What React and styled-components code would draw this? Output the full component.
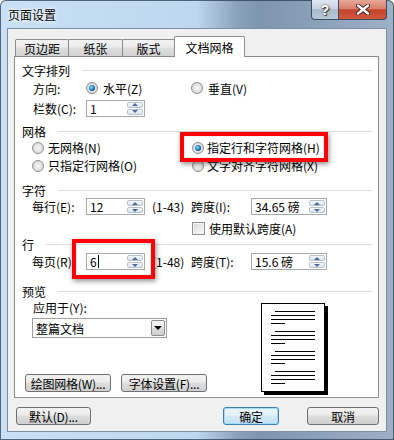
import React from 'react';
import styled, { createGlobalStyle, css } from 'styled-components';

const Global = createGlobalStyle`
  html, body { margin: 0; padding: 0; background: #fff; }
  body { font-family: "Noto Sans CJK SC", "Liberation Sans", sans-serif; font-size: 12px; color: #000; }
  * { box-sizing: border-box; }
`;

const Window = styled.div`
  position: relative;
  width: 394px;
  height: 440px;
  display: flex;
  flex-direction: column;
  padding: 0 7px 8px 7px;
  border-radius: 6px 6px 0 0;
  background: linear-gradient(90deg, #c9e0f5 0%, #bdd7ee 50%, #8ba2bc 60%, #7e95b0 66%, #9db1c6 100%);
  box-shadow: inset 0 0 0 1px rgba(45, 60, 80, 0.75);
`;

const TitleBar = styled.div`
  height: 28px;
  display: flex;
  align-items: flex-start;
  justify-content: space-between;
  flex: none;
`;

const Title = styled.div`
  margin: 7px 0 0 1px;
  line-height: 16px;
  font-size: 12px;
  text-shadow: 0 0 5px #fff, 0 0 3px #fff;
`;

const Caption = styled.div`
  display: flex;
`;

const CapBtn = styled.div`
  height: 20px;
  width: ${p => p.$w}px;
  border: 1px solid #3c4c60;
  border-top: none;
  display: flex;
  align-items: center;
  justify-content: center;
  color: #fff;
  font-family: "Liberation Sans", sans-serif;
  font-weight: bold;
  font-size: 14px;
  text-shadow: 0 0 2px #333, 1px 1px 1px #333;
  ${p => p.$close ? css`
    border-radius: 0 0 4px 0;
    border-left: none;
    background: linear-gradient(#e7a797 0%, #d9806c 45%, #c4432b 52%, #d0593c 100%);
  ` : css`
    border-radius: 0 0 0 4px;
    background: linear-gradient(#dfe8f0 0%, #c7d4e1 45%, #a9bacb 52%, #b9c8d7 100%);
  `}
`;

const Client = styled.div`
  flex: 1;
  display: flex;
  flex-direction: column;
  background: #f0f0f0;
  border: 1px solid #7f8ea1;
  padding: 7px 7px 0 6px;
`;

const TabRow = styled.div`
  display: flex;
  align-items: flex-end;
  height: 20px;
  padding-left: 1px;
  position: relative;
  z-index: 2;
  flex: none;
`;

const Tab = styled.div`
  width: ${p => p.$w}px;
  height: ${p => (p.$active ? 21 : 17)}px;
  margin-left: ${p => (p.$first ? 0 : -1)}px;
  margin-bottom: ${p => (p.$active ? -1 : 0)}px;
  border: 1px solid #898c95;
  border-bottom: none;
  border-radius: 2px 2px 0 0;
  display: flex;
  align-items: center;
  justify-content: center;
  padding-top: ${p => (p.$active ? 1 : 1)}px;
  position: relative;
  z-index: ${p => (p.$active ? 2 : 1)};
  background: ${p => (p.$active ? '#fff' : 'linear-gradient(#f3f3f3 0%, #ebebeb 45%, #dedede 50%, #d2d2d2 100%)')};
`;

const Panel = styled.div`
  height: 342px;
  flex: none;
  background: #fff;
  border: 1px solid #898c95;
  padding: 5px 6px 0 7px;
  display: flex;
  flex-direction: column;
`;

const Header = styled.div`
  display: flex;
  align-items: center;
  height: 16px;
  margin-top: ${p => p.$mt || 0}px;
  flex: none;
  &::after {
    content: '';
    flex: 1;
    height: 1px;
    background: #d5dfe5;
    margin-left: 12px;
  }
`;

const Row = styled.div`
  display: flex;
  align-items: center;
  height: ${p => p.$h || 17}px;
  margin-top: ${p => p.$mt || 0}px;
  padding-left: ${p => p.$pl ?? 10}px;
  flex: none;
`;

const Cell = styled.div`
  width: ${p => (p.$w ? `${p.$w}px` : 'auto')};
  padding-left: ${p => p.$pl || 0}px;
  flex: none;
  display: flex;
  align-items: center;
  gap: ${p => p.$gap || 0}px;
  white-space: nowrap;
`;

const Radio = styled.span`
  width: 12px;
  height: 12px;
  flex: none;
  border-radius: 50%;
  border: 1px solid #8f8f8f;
  position: relative;
  background: radial-gradient(circle at 50% 50%, #f6f6f6 0%, #e2e2e2 55%, #cfcfcf 100%);
  ${p => p.$on && css`
    &::after {
      content: '';
      position: absolute;
      left: 2px;
      top: 2px;
      width: 6px;
      height: 6px;
      border-radius: 50%;
      background: radial-gradient(circle at 40% 40%, #9fe3ff 0%, #2790d4 40%, #0d4670 75%, #1a2a3a 100%);
    }
  `}
`;

const Check = styled.span`
  width: 13px;
  height: 13px;
  flex: none;
  border: 1px solid #8f8f8f;
  background: linear-gradient(135deg, #d6d6d6 0%, #f4f4f4 80%, #fff 100%);
  box-shadow: inset 0 0 0 1px #f4f4f4;
`;

const SpinBox = styled.div`
  width: ${p => p.$w}px;
  height: 17px;
  flex: none;
  border: 1px solid #a5a9ae;
  background: #fff;
  display: flex;
  align-items: center;
  padding-left: 3px;
`;

const Caret = styled.span`
  display: inline-block;
  width: 1px;
  height: 13px;
  background: #000;
  margin-left: 1px;
`;

const SpinBtns = styled.div`
  margin-left: auto;
  margin-right: 1px;
  width: 16px;
  height: 13px;
  display: flex;
  flex-direction: column;
  gap: 1px;
`;

const SpinBtn = styled.div`
  flex: 1;
  border: 1px solid #b7c2ce;
  border-radius: 2px;
  background: linear-gradient(#f6f9fc, #dce4ed);
  display: flex;
  align-items: center;
  justify-content: center;
  &::before {
    content: '';
    border-left: 3px solid transparent;
    border-right: 3px solid transparent;
    ${p => (p.$down ? 'border-top: 3px solid #4d6b9c;' : 'border-bottom: 3px solid #4d6b9c;')}
  }
`;

const Lower = styled.div`
  display: flex;
  flex: none;
  padding-left: 3px;
`;

const LeftCol = styled.div`
  width: 236px;
  display: flex;
  flex-direction: column;
`;

const ApplyLabel = styled.div`
  height: 16px;
  line-height: 16px;
  margin: 1px 0 0 8px;
`;

const Select = styled.div`
  width: 135px;
  height: 20px;
  margin: 2px 0 0 7px;
  border: 1px solid #a0a0a0;
  background: #fff;
  display: flex;
  align-items: center;
  padding-left: 3px;
`;

const DropBtn = styled.div`
  margin-left: auto;
  margin-right: 1px;
  width: 14px;
  height: 16px;
  border: 1px solid #8b8b8b;
  border-radius: 2px;
  background: linear-gradient(#f3f3f3 0%, #ebebeb 45%, #dddddd 50%, #d0d0d0 100%);
  display: flex;
  align-items: center;
  justify-content: center;
  &::before {
    content: '';
    border-left: 4px solid transparent;
    border-right: 4px solid transparent;
    border-top: 4px solid #000;
  }
`;

const BtnRow = styled.div`
  display: flex;
  gap: 10px;
  margin-top: 36px;
`;

const Button = styled.div`
  width: ${p => p.$w}px;
  height: 18px;
  flex: none;
  border: 1px solid ${p => (p.$default ? '#3c7fb1' : '#707070')};
  border-radius: 3px;
  background: linear-gradient(#f2f2f2 0%, #ebebeb 45%, #dddddd 50%, #cfcfcf 100%);
  display: flex;
  align-items: center;
  justify-content: center;
  white-space: nowrap;
  letter-spacing: -0.2px;
  ${p => p.$default && css`
    box-shadow: inset 0 0 0 1px #9fdcfa;
    background: linear-gradient(#eaf6fd 0%, #e3f1fa 45%, #d3e9f7 50%, #c6e1f3 100%);
  `}
`;

const Preview = styled.svg`
  margin-top: 4px;
  flex: none;
`;

const Footer = styled.div`
  display: flex;
  align-items: center;
  margin-top: 9px;
  padding-left: 2px;
  flex: none;
`;

const Spacer = styled.div`
  flex: 1;
`;

const Mark = styled.div`
  position: absolute;
  left: ${p => p.$x}px;
  top: ${p => p.$y}px;
  width: ${p => p.$w}px;
  height: ${p => p.$h}px;
  border: 4px solid #ff0000;
  box-shadow: 1px 2px 5px rgba(0, 0, 0, 0.45), inset 0 0 2px rgba(0, 0, 0, 0.2);
  pointer-events: none;
`;

function Spin({ w, children }) {
  return (
    <SpinBox $w={w}>
      {children}
      <SpinBtns>
        <SpinBtn />
        <SpinBtn $down />
      </SpinBtns>
    </SpinBox>
  );
}

function PagePreview() {
  const groups = [8, 28, 48, 68];
  return (
    <Preview width="68" height="93" viewBox="0 0 68 93">
      <rect x="3" y="3" width="64" height="89" fill="#000" />
      <rect x="0.5" y="0.5" width="63" height="88" fill="#fff" stroke="#000" />
      {groups.map(g => (
        <g key={g} stroke="#000" strokeWidth="1">
          <line x1="14" y1={g + 0.5} x2="54" y2={g + 0.5} />
          <line x1="10" y1={g + 4.5} x2="54" y2={g + 4.5} />
          <line x1="10" y1={g + 8.5} x2="54" y2={g + 8.5} />
          <line x1="10" y1={g + 12.5} x2="24" y2={g + 12.5} />
        </g>
      ))}
    </Preview>
  );
}

export default function App() {
  return (
    <>
      <Global />
      <Window>
        <TitleBar>
          <Title>页面设置</Title>
          <Caption>
            <CapBtn $w={28}>?</CapBtn>
            <CapBtn $w={48} $close>
              <svg width="14" height="11" viewBox="0 0 14 11">
                <path d="M2 1.5 L12 9.5 M12 1.5 L2 9.5" stroke="#3a2020" strokeWidth="4.2" strokeLinecap="round" />
                <path d="M2 1.5 L12 9.5 M12 1.5 L2 9.5" stroke="#fff" strokeWidth="2.4" strokeLinecap="round" />
              </svg>
            </CapBtn>
          </Caption>
        </TitleBar>
        <Client>
          <TabRow>
            <Tab $w={54} $first>页边距</Tab>
            <Tab $w={55}>纸张</Tab>
            <Tab $w={53}>版式</Tab>
            <Tab $w={71} $active>文档网格</Tab>
          </TabRow>
          <Panel>
            <Header>文字排列</Header>
            <Row $h={18} $mt={1} $pl={11}>
              <Cell $w={53}>方向:</Cell>
              <Cell $w={105} $gap={5}><Radio $on />水平(Z)</Cell>
              <Cell $gap={5}><Radio />垂直(V)</Cell>
            </Row>
            <Row $h={18} $mt={2} $pl={11}>
              <Cell $w={53}>栏数(C):</Cell>
              <Spin w={59}>1</Spin>
            </Row>

            <Header $mt={6}>网格</Header>
            <Row $h={17}>
              <Cell $w={160} $gap={4}><Radio />无网格(N)</Cell>
              <Cell $gap={3}><Radio $on />指定行和字符网格(H)</Cell>
            </Row>
            <Row $h={17} $mt={1}>
              <Cell $w={160} $gap={4}><Radio />只指定行网格(O)</Cell>
              <Cell $gap={3}><Radio />文字对齐字符网格(X)</Cell>
            </Row>

            <Header $mt={8}>字符</Header>
            <Row $h={17}>
              <Cell $w={54}>每行(E):</Cell>
              <Spin w={59}>12</Spin>
              <Cell $w={46} $pl={7}>(1-43)</Cell>
              <Cell $w={60}>跨度(I):</Cell>
              <Spin w={76}>34.65 磅</Spin>
            </Row>
            <Row $h={16} $mt={5} $pl={170}>
              <Cell $gap={4}><Check />使用默认跨度(A)</Cell>
            </Row>

            <Header>行</Header>
            <Row $h={17} $mt={1}>
              <Cell $w={54}>每页(R):</Cell>
              <Spin w={59}>6<Caret /></Spin>
              <Cell $w={46} $pl={7}>(1-48)</Cell>
              <Cell $w={60}>跨度(T):</Cell>
              <Spin w={76}>15.6 磅</Spin>
            </Row>

            <Header $mt={13}>预览</Header>
            <Lower>
              <LeftCol>
                <ApplyLabel>应用于(Y):</ApplyLabel>
                <Select>
                  整篇文档
                  <DropBtn />
                </Select>
                <BtnRow>
                  <Button $w={86}>绘图网格(W)...</Button>
                  <Button $w={86}>字体设置(F)...</Button>
                </BtnRow>
              </LeftCol>
              <PagePreview />
            </Lower>
          </Panel>
          <Footer>
            <Button $w={75}>默认(D)...</Button>
            <Spacer />
            <Button $w={56} $default>确定</Button>
            <Button $w={72} style={{ marginLeft: 28 }}>取消</Button>
          </Footer>
        </Client>
        <Mark $x={180} $y={132} $w={148} $h={30} />
        <Mark $x={72} $y={239} $w={83} $h={40} />
      </Window>
    </>
  );
}
